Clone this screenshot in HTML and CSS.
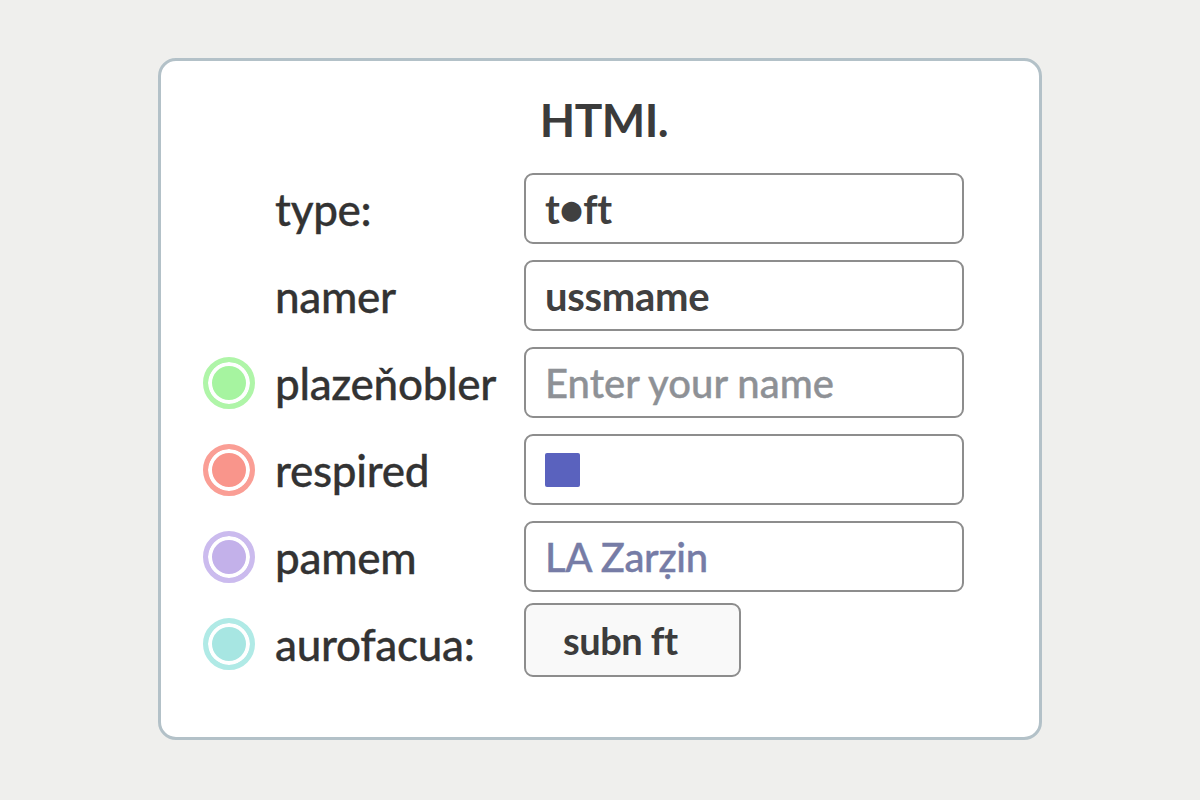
FILE: index.html
```html
<!DOCTYPE html>
<html lang="en">
<head>
    <meta charset="UTF-8">
    <title>HTML form</title>
    <link rel="stylesheet" href="styles.css">
</head>

<body>
    <!--카드-->
    <section class="card">
        <h1 class="tit">HTMI.</h1>

        <form class="frm">
            <!--1-->
            <span class="dot none"></span>
            <label class="lbl">type:</label>
            <div class="fld">t●ft</div>

            <!--2-->
            <span class="dot none"></span>
            <label class="lbl">namer</label>
            <div class="fld">ussmame</div>

            <!--3-->
            <span class="dot green"></span>
            <label class="lbl">plazeňobler</label>
            <div class="fld ph">Enter your name</div>

            <!--4-->
            <span class="dot red"></span>
            <label class="lbl">respired</label>
            <div class="fld"><span class="sq"></span></div>

            <!--5-->
            <span class="dot purple"></span>
            <label class="lbl">pamem</label>
            <div class="fld val">LA Zarẓin</div>

            <!--6-->
            <span class="dot teal"></span>
            <label class="lbl">aurofacua:</label>
            <div class="btnwrap"><button type="button" class="btn">subn ft</button></div>
        </form>
    </section>
</body>
</html>
```

FILE: styles.css
```css
html,
body,
h1 {
    margin: 0;
    padding: 0;
}

body {
    background-color: #efefed;
    font-family: Lato, "Noto Sans", sans-serif;
    color: #353535;
}

/*카드*/
.card {
    box-sizing: border-box;
    width: 884px;
    height: 682px;
    margin: 58px 0 0 158px;
    padding: 31px 75px 0 42px;
    background: #fff;
    border: 3px solid #b3c1c8;
    border-radius: 18px;
}

/*제목*/
.tit {
    padding-left: 41px;
    font-size: 46px;
    font-weight: 700;
    line-height: 56px;
    text-align: center;
    color: #3b3b3b;
    letter-spacing: -0.5px;
    margin-bottom: 25px;
}

/*폼 그리드*/
.frm {
    display: grid;
    grid-template-columns: 52px 229px 440px;
    grid-auto-rows: 71px;
    column-gap: 20px;
    row-gap: 16px;
    align-items: center;
}

.dot {
    box-sizing: border-box;
    width: 52px;
    height: 52px;
    border-radius: 50%;
    border: 5px solid;
    box-shadow: inset 0 0 0 4px #fff;
}
.dot.none { visibility: hidden; }
.green { background: #a6f4a0; border-color: #aff5a8; }
.red { background: #f9958b; border-color: #fa9e95; }
.purple { background: #c3b1ea; border-color: #cbbbee; }
.teal { background: #a7e6e2; border-color: #b0eae6; }

.lbl {
    font-size: 44px;
    font-weight: 500;
    color: #333;
    letter-spacing: -0.3px;
    -webkit-text-stroke: 0.3px #333;
    white-space: nowrap;
}

.fld {
    box-sizing: border-box;
    height: 71px;
    display: flex;
    align-items: center;
    padding-left: 19px;
    border: 2px solid #8d8d8d;
    border-radius: 9px;
    font-size: 40px;
    font-weight: 700;
    color: #404040;
    letter-spacing: -0.3px;
    white-space: nowrap;
}
.fld.ph {
    font-weight: 500;
    color: #8e9196;
    letter-spacing: 0;
    -webkit-text-stroke: 0.4px #8e9196;
}
.fld.val {
    font-weight: 500;
    color: #767ca6;
    -webkit-text-stroke: 0.4px #767ca6;
}

.sq {
    width: 35px;
    height: 34px;
    background: #5a62be;
    border-radius: 2px;
}

.btnwrap {
    display: flex;
    margin-top: -7px;
}
.btn {
    width: 217px;
    height: 74px;
    padding: 0 0 0 37px;
    text-align: left;
    background: #f9f9f9;
    border: 2px solid #8d8d8d;
    border-radius: 9px;
    font-family: Lato, "Noto Sans", sans-serif;
    font-size: 38px;
    font-weight: 700;
    color: #3c3c3c;
    letter-spacing: -0.5px;
}
```
